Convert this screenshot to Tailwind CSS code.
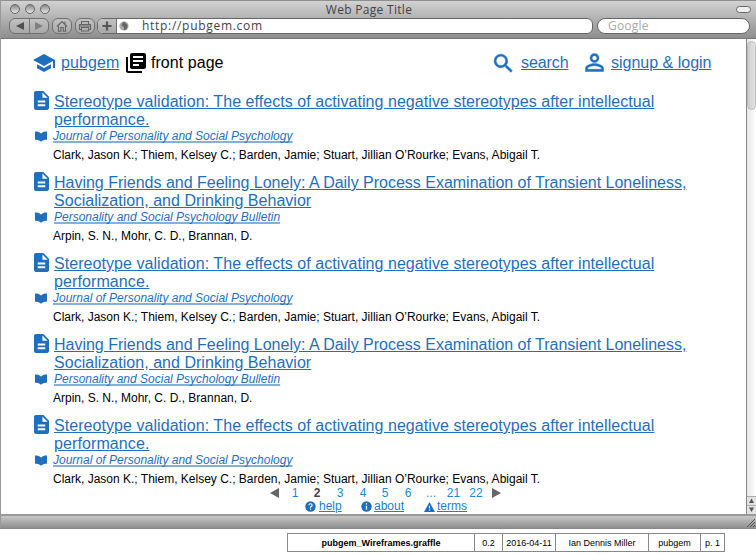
<!DOCTYPE html>
<html lang="en">
<head>
<meta charset="utf-8">
<title>Web Page Title</title>
<script src="https://cdn.jsdelivr.net/npm/@tailwindcss/browser@4"></script>
</head>
<body class="w-[756px] h-[554px] overflow-hidden bg-white font-['Liberation_Sans',Arial,sans-serif] text-black">
<svg class="hidden">
  <symbol id="doc" viewBox="4 2 16 20" preserveAspectRatio="none"><path d="M14 2H6c-1.100 0-1.990.9-1.990 2L4 20c0 1.100.89 2 1.990 2H18c1.100 0 2-.9 2-2V8l-6-6zm2 16H8v-2h8v2zm0-4H8v-2h8v2zm-3-5V3.500L18.500 9H13z"/></symbol>
  <symbol id="book" viewBox="0 0 12 11"><path d="M0 0.500H2Q4.500 1 6 2.500Q7.500 1 10 0.500H12V8.800H10Q7.500 9.300 6 10.800Q4.500 9.300 2 8.800H0Z"/></symbol>
</svg>

<div class="flex flex-col h-[529px]">
  <header class="h-[39px] shrink-0 bg-linear-to-b from-[#d2d2d2] to-[#8e8e8e] border-t border-t-[#909090] border-l border-l-[#999] border-b-[#777] border-b font-['Open_Sans','Noto_Sans',sans-serif]">
    <div class="flex h-[17px] items-center pl-[9px] pr-[5px] pb-px">
      <div class="flex gap-[5px]">
        <i class="size-[10px] rounded-full border border-[#666] bg-linear-to-b from-[#888] to-[#e8e8e8]"></i>
        <i class="size-[10px] rounded-full border border-[#666] bg-linear-to-b from-[#888] to-[#e8e8e8]"></i>
        <i class="size-[10px] rounded-full border border-[#666] bg-linear-to-b from-[#888] to-[#e8e8e8]"></i>
      </div>
      <div class="w-[664px] pr-[26px] text-center text-[12px] leading-[17px] tracking-[0.3px] text-[#444]">Web Page Title</div>
      <i class="ml-auto w-[15px] h-[7px] rounded-full border border-[#666] bg-[#eee]"></i>
    </div>
    <div class="flex h-[16px] pl-[8px]">
      <div class="flex w-[40px] rounded-[6px] border border-[#707070] bg-linear-to-b from-[#c2c2c2] to-[#a8a8a8]">
        <svg class="w-full h-full" viewBox="0 0 38 14"><path d="M14 3v8L6 7z" fill="#505050"/><path d="M19.500 0v14" stroke="#777"/><path d="M25 3v8l8-4z" fill="#808080"/></svg>
      </div>
      <div class="ml-[3px] w-[20px] rounded-[6px] border border-[#707070] bg-linear-to-b from-[#c2c2c2] to-[#a8a8a8]">
        <svg class="w-full h-full" viewBox="0 0 18 14" fill="none" stroke="#666" stroke-width="1.100"><path d="M4 7.500l5-5 5 5M5.500 7v5.200h2.300V8.500h2.400v3.700h2.300V7M12 5V2.500"/></svg>
      </div>
      <div class="ml-[3px] w-[20px] rounded-[6px] border border-[#707070] bg-linear-to-b from-[#c2c2c2] to-[#a8a8a8]">
        <svg class="w-full h-full" viewBox="0 0 18 14" fill="none" stroke="#666" stroke-width="1.100"><path d="M5.500 5V2.500h7V5M5.500 10.500h-2V5.500h11v5h-2M5.500 8.500h7v3.500h-7zM4 7h10"/></svg>
      </div>
      <div class="ml-[2px] w-[496px] flex rounded-[6px] border border-[#666] bg-white overflow-hidden">
        <div class="w-[19px] border-r border-[#707070] bg-linear-to-b from-[#c2c2c2] to-[#a8a8a8]"><svg class="w-full h-full" viewBox="0 0 18 14"><path d="M9 2.500v9M4.500 7h9" stroke="#555" stroke-width="2.200"/></svg></div>
        <svg class="ml-[2px] mt-[2px] size-[10px]" viewBox="0 0 10 10"><circle cx="5" cy="5" r="4.600" fill="#aaa"/><path d="M5 .5Q2 3 3 5L5 6V9.500Q9 8 8.500 4L6.500 2Z" fill="#666"/></svg>
        <div class="ml-[13px] text-[12px] leading-[14px] tracking-[0.7px] text-[#444]">http://pubgem.com</div>
      </div>
      <div class="ml-[4px] w-[153px] rounded-full border border-[#666] bg-white pl-[10px] text-[12px] leading-[14px] tracking-[0.2px] text-[#aaa]">Google</div>
    </div>
  </header>

  <div class="flex flex-1 min-h-0 border-l border-[#999]">
    <main class="flex-1 pt-[12px] pl-[31px]">
      <nav class="flex items-center h-[24px] text-[16px] leading-[20px] text-[#1f6fbe]">
        <svg class="size-[24px] shrink-0" viewBox="0 0 24 24" fill="#1f6fbe"><path d="M5 13.180v4L12 21l7-3.820v-4L12 17l-7-3.820zM12 3L1 9l11 6 9-4.910V17h2V9L12 3z"/></svg>
        <a class="ml-[5px] w-[59px] underline tracking-[0.1px]">pubgem</a>
        <svg class="ml-[6px] size-[20px] shrink-0" viewBox="2 2 20 20" fill="#000"><path d="M4 6H2v14c0 1.100.9 2 2 2h14v-2H4V6zm16-4H8c-1.100 0-2 .9-2 2v12c0 1.100.9 2 2 2h12c1.100 0 2-.9 2-2V4c0-1.100-.9-2-2-2zm-1 9H9V9h10v2zm-4 4H9v-2h6v2zm4-8H9V5h10v2z"/></svg>
        <span class="ml-[5px] w-[80px] whitespace-nowrap text-black tracking-[0.05px]">front page</span>
        <svg class="ml-[260px] size-[25px] shrink-0" viewBox="0 0 24 24" fill="#1f6fbe" stroke="#1f6fbe" stroke-width=".5"><path d="M15.500 14h-.79l-.28-.27C15.410 12.590 16 11.110 16 9.500 16 5.910 13.090 3 9.500 3S3 5.910 3 9.500 5.910 16 9.500 16c1.610 0 3.090-.59 4.230-1.570l.27.280v.79l5 4.990L20.490 19l-4.990-5zm-6 0C7.010 14 5 11.990 5 9.500S7.010 5 9.500 5 14 7.010 14 9.500 11.990 14 9.500 14z"/></svg>
        <a class="ml-[5px] w-[48px] underline tracking-[-0.1px]">search</a>
        <svg class="ml-[12px] size-[27px] shrink-0" viewBox="0 .9 24 24" fill="#1f6fbe" stroke="#1f6fbe" stroke-width=".4"><path d="M12 5.900c1.160 0 2.100.94 2.100 2.100s-.94 2.100-2.100 2.100S9.900 9.160 9.900 8s.94-2.100 2.100-2.100m0 9c2.970 0 6.100 1.460 6.100 2.100v1.100H5.900V17c0-.64 3.130-2.100 6.100-2.100M12 4C9.790 4 8 5.790 8 8s1.790 4 4 4 4-1.790 4-4-1.790-4-4-4zm0 9c-2.670 0-8 1.340-8 4v3h16v-3c0-2.660-5.330-4-8-4z"/></svg>
        <a class="ml-[3px] whitespace-nowrap underline">signup &amp; login</a>
      </nav>

      <section class="mt-[18px] h-[393px]">
        <article class="grid grid-cols-[22px_1fr] content-start h-[81px] text-[#1f6fbe]">
          <svg class="mt-[-2px] ml-[2px] w-[15px] h-[19px]" fill="#1f6fbe"><use href="#doc"/></svg>
          <h2 class="text-[16px] leading-[18px] h-[36px] whitespace-nowrap underline"><span class="tracking-[0.057px]">Stereotype validation: The effects of activating negative stereotypes after intellectual</span><br><span class="tracking-[0.1px]">performance.</span></h2>
          <svg class="mt-[2px] ml-[3px] w-[12px] h-[11px]" fill="#1f6fbe"><use href="#book"/></svg>
          <div class="ml-[-1px] text-[12px] leading-[14px] whitespace-nowrap"><a class="italic underline decoration-2 decoration-[#1f6fbe]/55 [text-decoration-skip-ink:none]">Journal of Personality and Social Psychology</a><p class="mt-[5px] text-black">Clark, Jason K.; Thiem, Kelsey C.; Barden, Jamie; Stuart, Jillian O’Rourke; Evans, Abigail T.</p></div>
        </article>
        <article class="grid grid-cols-[22px_1fr] content-start h-[81px] text-[#1f6fbe]">
          <svg class="mt-[-2px] ml-[2px] w-[15px] h-[19px]" fill="#1f6fbe"><use href="#doc"/></svg>
          <h2 class="text-[16px] leading-[18px] h-[36px] whitespace-nowrap underline"><span class="tracking-[-0.01px]">Having Friends and Feeling Lonely: A Daily Process Examination of Transient Loneliness,</span><br><span class="tracking-[0.03px]">Socialization, and Drinking Behavior</span></h2>
          <svg class="mt-[2px] ml-[3px] w-[12px] h-[11px]" fill="#1f6fbe"><use href="#book"/></svg>
          <div class="ml-[-1px] text-[12px] leading-[14px] whitespace-nowrap"><a class="ml-px italic underline decoration-2 decoration-[#1f6fbe]/55 [text-decoration-skip-ink:none]">Personality and Social Psychology Bulletin</a><p class="mt-[5px] text-black">Arpin, S. N., Mohr, C. D., Brannan, D.</p></div>
        </article>
        <article class="grid grid-cols-[22px_1fr] content-start h-[81px] text-[#1f6fbe]">
          <svg class="mt-[-2px] ml-[2px] w-[15px] h-[19px]" fill="#1f6fbe"><use href="#doc"/></svg>
          <h2 class="text-[16px] leading-[18px] h-[36px] whitespace-nowrap underline"><span class="tracking-[0.057px]">Stereotype validation: The effects of activating negative stereotypes after intellectual</span><br><span class="tracking-[0.1px]">performance.</span></h2>
          <svg class="mt-[2px] ml-[3px] w-[12px] h-[11px]" fill="#1f6fbe"><use href="#book"/></svg>
          <div class="ml-[-1px] text-[12px] leading-[14px] whitespace-nowrap"><a class="italic underline decoration-2 decoration-[#1f6fbe]/55 [text-decoration-skip-ink:none]">Journal of Personality and Social Psychology</a><p class="mt-[5px] text-black">Clark, Jason K.; Thiem, Kelsey C.; Barden, Jamie; Stuart, Jillian O’Rourke; Evans, Abigail T.</p></div>
        </article>
        <article class="grid grid-cols-[22px_1fr] content-start h-[81px] text-[#1f6fbe]">
          <svg class="mt-[-2px] ml-[2px] w-[15px] h-[19px]" fill="#1f6fbe"><use href="#doc"/></svg>
          <h2 class="text-[16px] leading-[18px] h-[36px] whitespace-nowrap underline"><span class="tracking-[-0.01px]">Having Friends and Feeling Lonely: A Daily Process Examination of Transient Loneliness,</span><br><span class="tracking-[0.03px]">Socialization, and Drinking Behavior</span></h2>
          <svg class="mt-[2px] ml-[3px] w-[12px] h-[11px]" fill="#1f6fbe"><use href="#book"/></svg>
          <div class="ml-[-1px] text-[12px] leading-[14px] whitespace-nowrap"><a class="ml-px italic underline decoration-2 decoration-[#1f6fbe]/55 [text-decoration-skip-ink:none]">Personality and Social Psychology Bulletin</a><p class="mt-[5px] text-black">Arpin, S. N., Mohr, C. D., Brannan, D.</p></div>
        </article>
        <article class="grid grid-cols-[22px_1fr] content-start h-[81px] text-[#1f6fbe]">
          <svg class="mt-[-2px] ml-[2px] w-[15px] h-[19px]" fill="#1f6fbe"><use href="#doc"/></svg>
          <h2 class="text-[16px] leading-[18px] h-[36px] whitespace-nowrap underline"><span class="tracking-[0.057px]">Stereotype validation: The effects of activating negative stereotypes after intellectual</span><br><span class="tracking-[0.1px]">performance.</span></h2>
          <svg class="mt-[2px] ml-[3px] w-[12px] h-[11px]" fill="#1f6fbe"><use href="#book"/></svg>
          <div class="ml-[-1px] text-[12px] leading-[14px] whitespace-nowrap"><a class="italic underline decoration-2 decoration-[#1f6fbe]/55 [text-decoration-skip-ink:none]">Journal of Personality and Social Psychology</a><p class="mt-[5px] text-black">Clark, Jason K.; Thiem, Kelsey C.; Barden, Jamie; Stuart, Jillian O’Rourke; Evans, Abigail T.</p></div>
        </article>
      </section>

      <div class="flex items-center pl-[238px] h-[14px] text-[12px] leading-[14px] text-center text-[#1a86e0]">
        <svg class="w-[9px] h-[10px]" viewBox="0 0 9 10"><path d="M9 0v10L0 5z" fill="#666"/></svg>
        <a class="ml-[5px] w-[22px]">1</a><b class="w-[22px] text-[#444]">2</b><a class="w-[24px]">3</a><a class="w-[22px]">4</a><a class="w-[22px]">5</a><a class="w-[24px]">6</a><a class="w-[22px]">...</a><a class="w-[23px]">21</a><a class="w-[22px]">22</a>
        <svg class="ml-[5px] w-[9px] h-[10px]" viewBox="0 0 9 10"><path d="M0 0v10L9 5z" fill="#666"/></svg>
      </div>
      <div class="flex items-center pl-[273px] h-[13px] text-[12px] leading-[13px] text-[#1a7fd4]">
        <svg class="size-[11px]" viewBox="0 0 11 11"><circle cx="5.500" cy="5.500" r="5.200" fill="#1f6fbe"/><path d="M3.800 4.300Q3.900 2.700 5.500 2.700T7.200 4.200Q7.200 5 5.500 6V6.800M5.500 7.600V8.800" fill="none" stroke="white" stroke-width="1.100"/></svg>
        <a class="ml-[3px] w-[22px] underline">help</a>
        <svg class="ml-[20px] size-[11px]" viewBox="0 0 11 11"><circle cx="5.500" cy="5.500" r="5.200" fill="#1f6fbe"/><path d="M5.500 2.300v1.300M5.500 4.800v3.700" stroke="white" stroke-width="1.300"/></svg>
        <a class="ml-[2px] w-[30px] underline">about</a>
        <svg class="ml-[20px] w-[11px] h-[10px]" viewBox="0 0 11 10"><path d="M5.500 0L11 10H0z" fill="#1f6fbe"/><path d="M5.500 3.700v2.800M5.500 7.500v1.200" stroke="white"/></svg>
        <a class="ml-[2px] underline">terms</a>
      </div>
    </main>
    <aside class="w-[10px] flex flex-col border-l border-[#888] bg-linear-to-r from-[#e6e6e6] to-white">
      <div class="mt-[2px] h-[69px] rounded-[5px] border border-[#bbb] bg-linear-to-r from-[#ccc] to-[#e4e4e4]"></div>
      <svg class="mt-auto w-[9px] h-[18px] shrink-0" viewBox="0 0 9 18"><path d="M0 0h9v18H0z" fill="#e2e2e2"/><path d="M0 .5h9M0 9.500h9" stroke="#aaa"/><path d="M4.500 2.500L7 7H2zM2 11.500h5L4.500 16z" fill="#555"/></svg>
    </aside>
  </div>
  <footer class="flex justify-end items-end h-[15px] shrink-0 border-t-2 border-t-[#999] border-b border-b-[#888] border-l border-l-[#999] bg-linear-to-b from-[#c8c8c8] to-[#8e8e8e]">
    <svg class="size-[10px]" viewBox="0 0 10 10"><path d="M1 9l8-8M4 9l5-5M7 9l2-2" stroke="#555"/></svg>
  </footer>
</div>
<div class="mt-[4px] ml-[287px] w-[438px] h-[19px] flex border border-[#888] divide-x divide-[#888] text-[9px] leading-[19px] text-center whitespace-nowrap">
  <b class="w-[187px]">pubgem_Wireframes.graffle</b>
  <span class="w-[28px]">0.2</span>
  <span class="w-[53px]">2016-04-11</span>
  <span class="w-[93px]">Ian Dennis Miller</span>
  <span class="w-[52px]">pubgem</span>
  <span class="flex-1">p. 1</span>
</div>
</body>
</html>
